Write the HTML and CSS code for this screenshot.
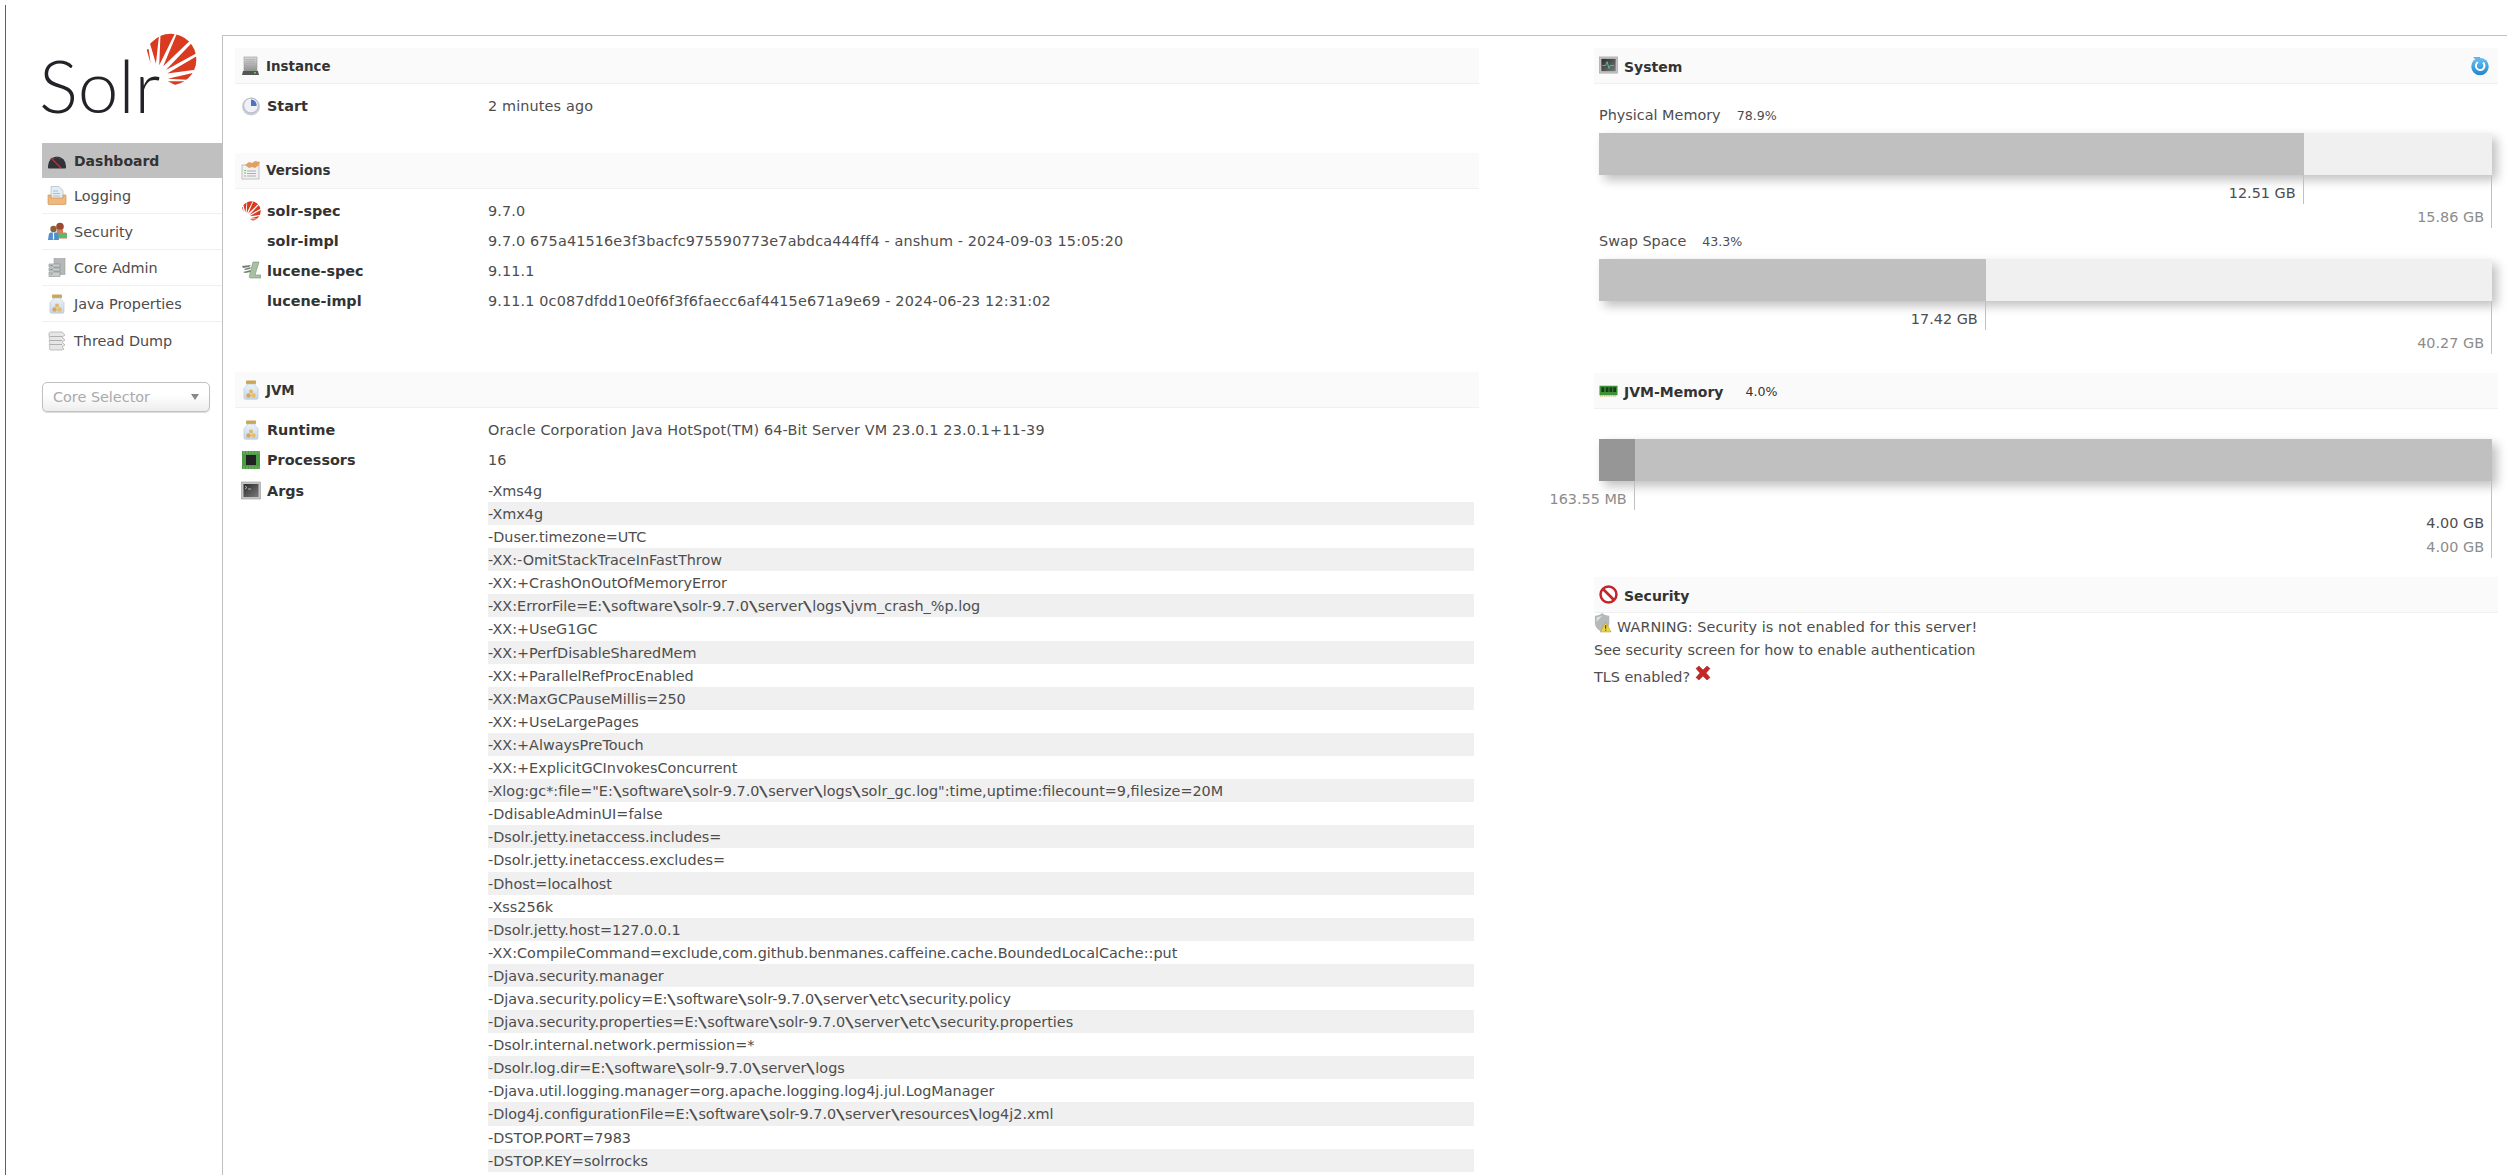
FILE: index.html
```html
<!DOCTYPE html>
<html lang="en">
<head>
<meta charset="utf-8">
<title>Solr Admin</title>
<link rel="stylesheet" href="styles.css">
</head>
<body>
<svg class="defs" width="0" height="0" aria-hidden="true">
  <defs>
    <clipPath id="sunclip"><circle cx="420" cy="120" r="78"/></clipPath>
    <linearGradient id="gGray" x1="0" y1="0" x2="0" y2="1"><stop offset="0" stop-color="#d8d8d8"/><stop offset="1" stop-color="#8c8c8c"/></linearGradient>
    <linearGradient id="gGlass" x1="0" y1="0" x2="0" y2="1"><stop offset="0" stop-color="#eef3f8"/><stop offset="1" stop-color="#c3d6e8"/></linearGradient>
    <linearGradient id="gBlue" x1="0" y1="0" x2="0" y2="1"><stop offset="0" stop-color="#6cc0f0"/><stop offset="1" stop-color="#1f86d0"/></linearGradient>
    <linearGradient id="gDark" x1="0" y1="0" x2="1" y2="1"><stop offset="0" stop-color="#2c2c2c"/><stop offset="1" stop-color="#7a7a7a"/></linearGradient>
    <symbol id="i-sun" viewBox="340 40 160 160">
      <g clip-path="url(#sunclip)" fill="#d93a20">
        <polygon points="348,90 354,88 360,132"/><polygon points="358,72 385,50 376,132"/><polygon points="390,40 434,40 386,137"/><polygon points="440,40 480,62 398,140"/><polygon points="484,70 500,100 406,152"/><polygon points="502,108 502,150 410,162"/><polygon points="500,158 484,182 412,178"/><polygon points="476,186 444,202 412,186"/>
      </g>
    </symbol>
    <symbol id="i-instance" viewBox="0 0 20 20">
      <rect x="3" y="1" width="13" height="15" fill="url(#gGray)" stroke="#9a9a9a" stroke-width=".6"/>
      <path d="M5 3.500h9M5 5.500h9M5 7.500h9M5 9.500h9" stroke="#aaa" stroke-width=".7"/>
      <path d="M2 15h15l1 4H1z" fill="#555"/><rect x="13" y="16" width="2" height="1.400" fill="#5fd06a"/>
    </symbol>
    <symbol id="i-clock" viewBox="0 0 20 20">
      <circle cx="10" cy="10.500" r="9" fill="#c9ced4"/><circle cx="10" cy="9.500" r="7.400" fill="#eef2f6" stroke="#9fa9b4" stroke-width=".7"/>
      <path d="M10 3.500v6.500h5.500a5.500 5.500 0 0 0-5.500-6.500z" fill="#4f6fc9"/>
    </symbol>
    <symbol id="i-versions" viewBox="0 0 20 20">
      <rect x="1" y="5" width="17" height="14" fill="#f1f1f1" stroke="#a9a9a9" stroke-width=".7"/>
      <path d="M6 11h9M6 13.500h9M6 16h9" stroke="#a8b0b8"/><path d="M3 10.500h2M3 13h2" stroke="#7bbf7b"/><path d="M3 16h2" stroke="#d88"/>
      <path d="M4 5l4-3 3 1 3-2 5 1-1 3-4 3-3-1-3 1z" fill="#e2a065"/>
    </symbol>
    <symbol id="i-lucene" viewBox="0 0 20 20">
      <path d="M1 5l9-1-2 2-6 1zM3 8l7-2-1 2-5 1zM2 11l8-2 0 2-6 1z" fill="#6f7f6c"/>
      <path d="M12 1h6l-4 13h6v3H10c-2 0-2-1-1.500-2.500z" fill="#a9c0a2" stroke="#74906f" stroke-width=".6"/>
    </symbol>
    <symbol id="i-jar" viewBox="0 0 20 20">
      <rect x="5" y="0.500" width="10" height="3.500" rx=".8" fill="#c9a65a"/>
      <path d="M6 4h8v1.500l3 3V18c0 .8-.6 1.200-1.200 1.200H4.200C3.600 19.200 3 18.800 3 18V8.500l3-3z" fill="url(#gGlass)" stroke="#b3c2d0" stroke-width=".6"/>
      <circle cx="10" cy="11.500" r="2" fill="#e0b868"/><circle cx="7.500" cy="15.500" r="2.200" fill="#dca552"/><circle cx="12.500" cy="15.500" r="2.200" fill="#e6bb6a"/>
    </symbol>
    <symbol id="i-chip" viewBox="0 0 20 20">
      <rect x="1" y="1" width="18" height="18" fill="#4f9a48"/>
      <path d="M3 1v18M6 1v18M9 1v18M12 1v18M15 1v18M18 1v18" stroke="#8cc97c" stroke-width=".7" stroke-dasharray="3 12"/>
      <rect x="5" y="5" width="10" height="10" fill="#222"/>
    </symbol>
    <symbol id="i-console" viewBox="0 0 20 20">
      <rect x="0.500" y="1" width="19" height="17" fill="#c4c4c4" stroke="#999" stroke-width=".6"/>
      <rect x="2.500" y="3" width="15" height="13" fill="url(#gDark)"/>
      <path d="M4 5l2 1.500L4 8M7 8h3" stroke="#ddd" stroke-width=".7" fill="none"/>
    </symbol>
    <symbol id="i-system" viewBox="0 0 20 20">
      <rect x="0.500" y="1" width="19" height="17" fill="#c4c4c4" stroke="#999" stroke-width=".6"/>
      <rect x="2.500" y="3" width="15" height="13" fill="url(#gDark)"/>
      <path d="M3.500 10H7l1.500-4 2 7 1.500-3h4" stroke="#4cd0a0" stroke-width=".9" fill="none"/>
    </symbol>
    <symbol id="i-refresh" viewBox="0 0 20 20">
      <circle cx="10" cy="10.500" r="8.700" fill="url(#gBlue)"/>
      <path d="M13 6.500a4.300 4.300 0 1 1-5-.5" stroke="#fff" stroke-width="2" fill="none"/>
      <path d="M3 1h7v7z" fill="#62b4ec"/>
    </symbol>
    <symbol id="i-ram" viewBox="0 0 20 20">
      <rect x="0.500" y="5" width="19" height="10" fill="#3f8f3c"/>
      <path d="M2.500 6.500h3v5h-3zM7 6.500h3v5H7zM11 6.500h3v5h-3zM15 6.500h3v5h-3z" fill="#163f16"/>
      <path d="M1 15.800h18" stroke="#c9b760" stroke-width="1.500" stroke-dasharray="1 1"/>
    </symbol>
    <symbol id="i-stop" viewBox="0 0 20 20">
      <circle cx="10" cy="10" r="8.400" fill="#fff" stroke="#c0262c" stroke-width="2.600"/>
      <path d="M4.500 4.500l11 11" stroke="#c0262c" stroke-width="2.800"/>
    </symbol>
    <symbol id="i-shield" viewBox="0 0 20 22">
      <path d="M9 0c2 2 5 3 8 3v8c0 5-4 8-8 10-4-2-8-5-8-10V3c3 0 6-1 8-3z" fill="#b4b9bb"/>
      <path d="M9 3L3 5v5l6-7z" fill="#dfe2e3"/>
      <path d="M13 10l6 11H7z" fill="#f0d23a" stroke="#a58f1d" stroke-width=".5"/><path d="M13 13.500v4M13 18.500v1.200" stroke="#333" stroke-width="1.200"/>
    </symbol>
    <symbol id="i-x" viewBox="0 0 16 16">
      <path d="M1 3.500L4 1l4 4 4-4 3 2.500-4 4.500 4 4.500-3 2.500-4-4-4 4-3-2.500 4-4.500z" fill="#c62828" stroke="#9c1b1b" stroke-width=".5"/>
    </symbol>
    <symbol id="i-gauge" viewBox="0 0 20 20">
      <path d="M1 15a9 9.500 0 0 1 18 0v1.500c0 .8-.6 1-1 1H2c-.4 0-1-.2-1-1z" fill="#30343a"/>
      <path d="M4 7l10 10" stroke="#d42c2c" stroke-width="1.300"/>
      <path d="M6 6.500l1 1M10 5v1.500M14 6.500l-1 1" stroke="#999" stroke-width=".8"/>
    </symbol>
    <symbol id="i-logging" viewBox="0 0 20 20">
      <path d="M4 0.500h8l4 4v9H4z" fill="#e3edf2" stroke="#9fb3bf" stroke-width=".6"/>
      <path d="M6 5h5M6 7.500h7M6 10h7" stroke="#9fb3bf" stroke-width=".8"/>
      <path d="M1 9h3v3h12V9h3v8.500c0 .7-.4 1-1 1H2c-.6 0-1-.3-1-1z" fill="#eeb87e" stroke="#c98a4f" stroke-width=".6"/>
    </symbol>
    <symbol id="i-security" viewBox="0 0 20 20">
      <circle cx="13" cy="4.500" r="3.800" fill="#9a4a30"/><path d="M10 7.500h6v3h3l1 6H9z" fill="#d47c5c"/><path d="M11 11h9v5h-9z" fill="#5cb86a"/>
      <circle cx="6.500" cy="7" r="3.200" fill="#8a6238"/><path d="M1 18l.8-5.500c.3-1.500 1.400-2 2.700-2h4c1.300 0 2.400.5 2.700 2L12 18z" fill="#4f8fd0"/><path d="M6.500 10.500v7" stroke="#fff" stroke-width="1.200"/>
    </symbol>
    <symbol id="i-cores" viewBox="0 0 20 20">
      <rect x="7" y="0.500" width="11" height="16" fill="#b5b8b8" stroke="#8e9292" stroke-width=".5"/>
      <path d="M2 6h11v3H2z M2 10h11v3H2z M2 14h11v4.500H2z" fill="#c9cccc" stroke="#858989" stroke-width=".6"/>
      <path d="M3.500 7.500h2M3.500 11.500h2M3.500 16h2" stroke="#6a9a6a"/>
    </symbol>
    <symbol id="i-threads" viewBox="0 0 20 20">
      <path d="M2 2.500c0-1 1-1.500 2-1.500h11l3 3-3 2 3 3-3 2 3 3-3 2 2 2-2 1H4c-2 0-2-2-1-3-1-1-1-3 0-4-1-1-1-3 0-4-1-1-1-3-1-3z" fill="#e6e6e6" stroke="#a8a8a8" stroke-width=".7"/>
      <path d="M3 5.500h12M3 9.500h12M3 13.500h12" stroke="#a8a8a8" stroke-width=".9"/>
    </symbol>
  </defs>
</svg>

<div class="page">
  <div class="frame">
    <aside class="sidebar">
      <div class="logo">
        <span class="logo-text">Solr</span>
        <svg class="logo-sun"><use href="#i-sun"/></svg>
      </div>
      <ul class="nav">
        <li class="nav-item active"><svg class="nav-icon"><use href="#i-gauge"/></svg>Dashboard</li>
        <li class="nav-item"><svg class="nav-icon"><use href="#i-logging"/></svg>Logging</li>
        <li class="nav-item"><svg class="nav-icon"><use href="#i-security"/></svg>Security</li>
        <li class="nav-item"><svg class="nav-icon"><use href="#i-cores"/></svg>Core Admin</li>
        <li class="nav-item"><svg class="nav-icon"><use href="#i-jar"/></svg>Java Properties</li>
        <li class="nav-item last"><svg class="nav-icon"><use href="#i-threads"/></svg>Thread Dump</li>
      </ul>
      <div class="core-selector"><span>Core Selector</span><span class="caret"></span></div>
    </aside>

    <main class="content">
      <div class="col-left">
        <section class="block block-instance">
          <h2 class="block-head"><svg class="icon"><use href="#i-instance"/></svg>Instance</h2>
          <div class="rows">
            <div class="row"><div class="label"><svg class="icon"><use href="#i-clock"/></svg>Start</div><div class="value">2 minutes ago</div></div>
          </div>
        </section>

        <section class="block block-versions">
          <h2 class="block-head"><svg class="icon"><use href="#i-versions"/></svg>Versions</h2>
          <div class="rows">
            <div class="row"><div class="label"><svg class="icon"><use href="#i-sun"/></svg>solr-spec</div><div class="value">9.7.0</div></div>
            <div class="row"><div class="label"><span class="icon"></span>solr-impl</div><div class="value">9.7.0 675a41516e3f3bacfc975590773e7abdca444ff4 - anshum - 2024-09-03 15:05:20</div></div>
            <div class="row"><div class="label"><svg class="icon"><use href="#i-lucene"/></svg>lucene-spec</div><div class="value">9.11.1</div></div>
            <div class="row"><div class="label"><span class="icon"></span>lucene-impl</div><div class="value">9.11.1 0c087dfdd10e0f6f3f6faecc6af4415e671a9e69 - 2024-06-23 12:31:02</div></div>
          </div>
        </section>

        <section class="block">
          <h2 class="block-head"><svg class="icon"><use href="#i-jar"/></svg>JVM</h2>
          <div class="rows">
            <div class="row"><div class="label"><svg class="icon"><use href="#i-jar"/></svg>Runtime</div><div class="value">Oracle Corporation Java HotSpot(TM) 64-Bit Server VM 23.0.1 23.0.1+11-39</div></div>
            <div class="row"><div class="label"><svg class="icon"><use href="#i-chip"/></svg>Processors</div><div class="value">16</div></div>
            <div class="row row-args">
              <div class="label"><svg class="icon"><use href="#i-console"/></svg>Args</div>
              <ul class="args">
                <li>-Xms4g</li>
                <li>-Xmx4g</li>
                <li>-Duser.timezone=UTC</li>
                <li>-XX:-OmitStackTraceInFastThrow</li>
                <li>-XX:+CrashOnOutOfMemoryError</li>
                <li>-XX:ErrorFile=E:<span class="bs">\</span>software<span class="bs">\</span>solr-9.7.0<span class="bs">\</span>server<span class="bs">\</span>logs<span class="bs">\</span>jvm_crash_%p.log</li>
                <li>-XX:+UseG1GC</li>
                <li>-XX:+PerfDisableSharedMem</li>
                <li>-XX:+ParallelRefProcEnabled</li>
                <li>-XX:MaxGCPauseMillis=250</li>
                <li>-XX:+UseLargePages</li>
                <li>-XX:+AlwaysPreTouch</li>
                <li>-XX:+ExplicitGCInvokesConcurrent</li>
                <li>-Xlog:gc*:file="E:<span class="bs">\</span>software<span class="bs">\</span>solr-9.7.0<span class="bs">\</span>server<span class="bs">\</span>logs<span class="bs">\</span>solr_gc.log":time,uptime:filecount=9,filesize=20M</li>
                <li>-DdisableAdminUI=false</li>
                <li>-Dsolr.jetty.inetaccess.includes=</li>
                <li>-Dsolr.jetty.inetaccess.excludes=</li>
                <li>-Dhost=localhost</li>
                <li>-Xss256k</li>
                <li>-Dsolr.jetty.host=127.0.0.1</li>
                <li>-XX:CompileCommand=exclude,com.github.benmanes.caffeine.cache.BoundedLocalCache::put</li>
                <li>-Djava.security.manager</li>
                <li>-Djava.security.policy=E:<span class="bs">\</span>software<span class="bs">\</span>solr-9.7.0<span class="bs">\</span>server<span class="bs">\</span>etc<span class="bs">\</span>security.policy</li>
                <li>-Djava.security.properties=E:<span class="bs">\</span>software<span class="bs">\</span>solr-9.7.0<span class="bs">\</span>server<span class="bs">\</span>etc<span class="bs">\</span>security.properties</li>
                <li>-Dsolr.internal.network.permission=*</li>
                <li>-Dsolr.log.dir=E:<span class="bs">\</span>software<span class="bs">\</span>solr-9.7.0<span class="bs">\</span>server<span class="bs">\</span>logs</li>
                <li>-Djava.util.logging.manager=org.apache.logging.log4j.jul.LogManager</li>
                <li>-Dlog4j.configurationFile=E:<span class="bs">\</span>software<span class="bs">\</span>solr-9.7.0<span class="bs">\</span>server<span class="bs">\</span>resources<span class="bs">\</span>log4j2.xml</li>
                <li>-DSTOP.PORT=7983</li>
                <li>-DSTOP.KEY=solrrocks</li>
              </ul>
            </div>
          </div>
        </section>
      </div>

      <div class="col-right">
        <section class="block">
          <h2 class="block-head head-right"><svg class="icon icon-system"><use href="#i-system"/></svg>System<svg class="refresh"><use href="#i-refresh"/></svg></h2>
          <div class="mem mem-first">
            <div class="mem-title">Physical Memory<span class="pct">78.9%</span></div>
            <div class="bar"><div class="bar-used" style="width:78.9%"></div></div>
            <div class="labels">
              <div class="lab lab-1" style="width:78.9%">12.51 GB</div>
              <div class="lab lab-2 muted" style="width:100%">15.86 GB</div>
            </div>
          </div>
          <div class="mem">
            <div class="mem-title">Swap Space<span class="pct">43.3%</span></div>
            <div class="bar"><div class="bar-used" style="width:43.3%"></div></div>
            <div class="labels">
              <div class="lab lab-1" style="width:43.3%">17.42 GB</div>
              <div class="lab lab-2 muted" style="width:100%">40.27 GB</div>
            </div>
          </div>
        </section>

        <section class="block block-jvm-mem">
          <h2 class="block-head head-right"><svg class="icon icon-system"><use href="#i-ram"/></svg>JVM-Memory<span class="pct">4.0%</span></h2>
          <div class="mem mem-jvm">
            <div class="bar bar-full"><div class="bar-dark" style="width:4%"></div></div>
            <div class="labels">
              <div class="lab lab-1 muted" style="width:4%">163.55 MB</div>
              <div class="lab lab-2" style="width:100%">4.00 GB</div>
              <div class="lab lab-3 muted" style="width:100%">4.00 GB</div>
            </div>
          </div>
        </section>

        <section class="block block-security">
          <h2 class="block-head head-right"><svg class="icon icon-system"><use href="#i-stop"/></svg>Security</h2>
          <div class="sec-warning"><svg class="shield"><use href="#i-shield"/></svg><span>WARNING: Security is not enabled for this server!</span></div>
          <div class="sec-line">See security screen for how to enable authentication</div>
          <div class="sec-line sec-tls">TLS enabled? <svg class="cross"><use href="#i-x"/></svg></div>
        </section>
      </div>
    </main>
  </div>
</div>
</body>
</html>
```

FILE: styles.css
```css
* { box-sizing: border-box; }
html, body { margin: 0; height: 100%; overflow: hidden; background: #fff; }
body {
  font-family: "DejaVu Sans", Verdana, sans-serif;
  font-size: 14.4px;
  line-height: 18px;
  color: #4d4d4d;
}
.defs { position: absolute; }
.page { height: 100vh; padding: 5px 0 0 5px; }
.frame {
  height: 100%;
  display: flex;
  border-left: 1px solid #5a6270;
  padding: 30px 0 0 36px;
}

/* sidebar */
.sidebar { width: 180px; flex: none; }
.logo { position: relative; height: 108px; }
.logo-text {
  display: block;
  font-family: Lato, "Open Sans", sans-serif;
  font-weight: 300;
  font-size: 73px;
  line-height: 72px;
  color: #222228;
  padding-top: 14px;
  margin-left: -3px;
}
.logo-sun { position: absolute; left: 102px; top: -2px; width: 53px; height: 53px; }
.nav { list-style: none; margin: 0; padding: 0; }
.nav-item {
  height: 36px;
  display: flex;
  align-items: center;
  padding-left: 5px;
  gap: 7px;
  padding-top: 1px;
  border-bottom: 1px solid #f0f0f0;
}
.nav-item.last { border-bottom: 0; }
.nav-item.active {
  height: 35px;
  background: #c0c0c0;
  font-weight: bold;
  font-size: 14px;
  color: #333;
  border-bottom: 0;
}
.nav-icon { width: 20px; height: 20px; flex: none; }
.core-selector {
  margin-top: 24px;
  width: 168px;
  height: 30px;
  border: 1px solid #c0c0c0;
  border-radius: 5px;
  background: linear-gradient(#fff 40%, #eee);
  box-shadow: 0 1px 1px #ddd;
  color: #aaa;
  display: flex;
  align-items: center;
  justify-content: space-between;
  padding: 0 10px;
}
.caret { width: 0; height: 0; border: 4px solid transparent; border-top: 6px solid #888; border-bottom: 0; }

/* main */
.content {
  flex: 1;
  min-width: 0;
  display: flex;
  justify-content: space-between;
  border-top: 1px solid #c0c0c0;
  border-left: 1px solid #c0c0c0;
  padding: 12px 9px 0 12px;
}
.col-left { width: 1244px; flex: none; }
.col-right { width: 904px; flex: none; }
.block-head {
  margin: 0;
  height: 36px;
  display: flex;
  align-items: center;
  gap: 5px;
  padding: 2px 0 0 6px;
  background: #fafafa;
  border-bottom: 1px solid #f0f0f0;
  font-size: 13.4px;
  font-weight: bold;
  color: #333;
}
.block-head > .icon { margin-top: -2px; }
.block-head > .refresh { margin-top: -2px; }
.icon { width: 20px; height: 20px; flex: none; display: block; }
.rows { padding-top: 6.6px; }
.block-instance { margin-bottom: 32px; }
.block-versions { margin-bottom: 56px; }
.row { display: flex; align-items: center; min-height: 30.25px; padding-left: 6px; }
.value { letter-spacing: .14px; }
.label { width: 247px; flex: none; display: flex; align-items: center; gap: 6px; font-weight: bold; color: #333; font-size: 14.4px; }
.row-args { align-items: flex-start; }
.row-args .label { padding-top: 5px; }
.args { list-style: none; margin: 3.4px 0 0; padding: 0; flex: 1; margin-right: 5px; }
.args li { height: 23.1px; padding-top: 2px; line-height: 21.1px; white-space: nowrap; }
.args li:nth-child(even) { background: #f0f0f0; }
.bs { display: inline-block; width: 8.9px; text-align: center; transform: scaleX(1.8); }

/* right column */
.head-right { padding-left: 5px; gap: 6px; font-size: 14px; }
.icon-system { width: 19px; height: 19px; }
.refresh { width: 20px; height: 20px; margin-left: auto; margin-right: 8px; }
.pct { font-size: 12.6px; font-weight: normal; margin-left: 16px; }
.mem { padding: 4px 6px 0 5px; }
.mem-first { padding-top: 22px; }
.mem-title { height: 18px; margin-bottom: 9px; }
.bar { height: 42px; background: #f0f0f0; box-shadow: 5px 5px 10px #c0c0c0; }
.bar-used { height: 100%; background: #c0c0c0; }
.bar-full { background: #c0c0c0; }
.bar-dark { height: 100%; background: #969696; }
.labels { display: grid; justify-items: start; }
.lab {
  grid-area: 1 / 1;
  display: flex;
  justify-content: flex-end;
  align-items: flex-end;
  white-space: nowrap;
  padding: 0 7px 2px 0;
  border-right: 1px solid #c0c0c0;
}
.lab-1 { height: 29px; }
.lab-2 { height: 53px; }
.lab-3 { height: 77px; }
.muted { color: #8c8c8c; }
.block-jvm-mem { margin-top: 19px; }
.mem-jvm { padding-top: 30px; }
.block-security { margin-top: 19px; }
.sec-warning { display: flex; align-items: flex-start; gap: 5px; line-height: 23px; }
.sec-warning span { margin-top: 3px; letter-spacing: .08px; }
.shield { width: 18px; height: 20px; flex: none; }
.sec-line { line-height: 23px; }
.sec-warning + .sec-line { margin-top: -.5px; }
.sec-tls { margin-top: 3px; }
.cross { width: 16px; height: 16px; vertical-align: 1px; }
```
